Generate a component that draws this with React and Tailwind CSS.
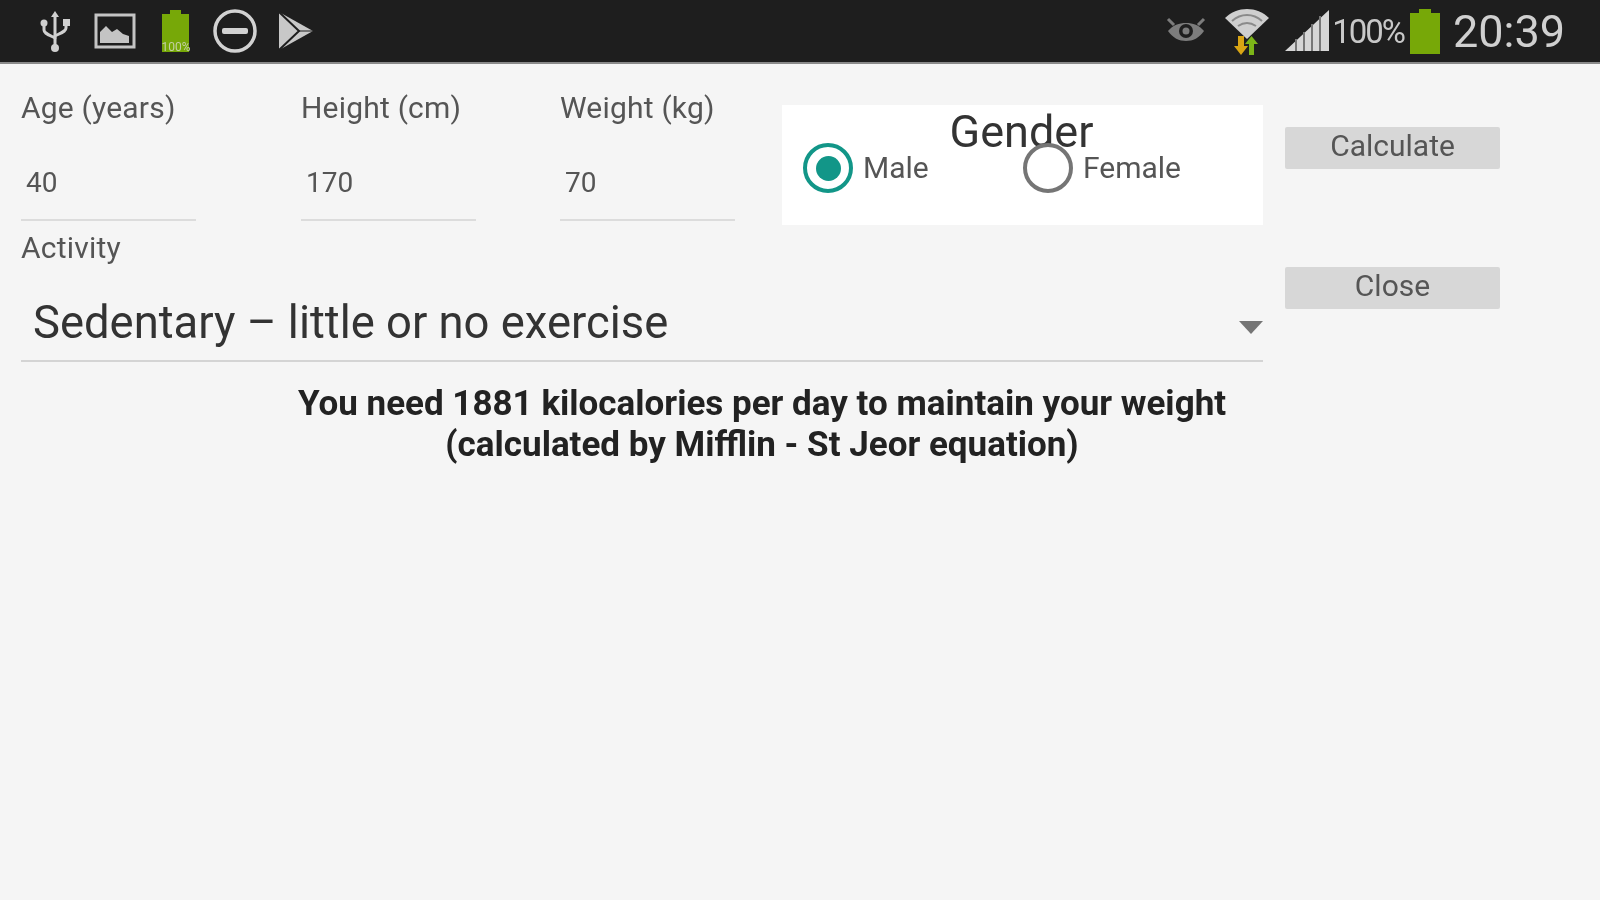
const font = { fontFamily: 'Roboto, sans-serif' }

function StatusLeft() {
  return (
    <div className="flex items-center gap-[11px]">
      <svg width="32" height="44" viewBox="0 0 32 44" fill="none" className="ml-[39px]">
        <g stroke="#d0d0d0" strokeWidth="3" strokeLinecap="round">
          <path d="M16 6v32" />
          <path d="M5 16v5c0 3 3 4 11 8" />
          <path d="M27 14v5c0 3-3 4-11 8" />
        </g>
        <path d="M16 2l4 6h-8z" fill="#d0d0d0" />
        <circle cx="5" cy="14" r="3.500" fill="#d0d0d0" />
        <rect x="24" y="10" width="7" height="7" fill="#d0d0d0" />
        <circle cx="16" cy="39" r="4" fill="#d0d0d0" />
      </svg>
      <svg width="42" height="36" viewBox="0 0 42 36" fill="none" className="ml-[12px]">
        <rect x="2" y="2" width="38" height="32" stroke="#c4c4c4" strokeWidth="3" />
        <path d="M6 30V19l6-6 6 6 5-3 6 5 6 2v7z" fill="#c4c4c4" />
      </svg>
      <svg width="36" height="46" viewBox="0 0 36 46" className="ml-[11px]">
        <path d="M12 2h11v4h8v38H4V6h8z" fill="#77a808" />
        <text x="18" y="43" textAnchor="middle" fontSize="12" fill="#c3d0a4" fontFamily="Roboto, sans-serif">100%</text>
      </svg>
      <svg width="46" height="46" viewBox="0 0 46 46" fill="none" className="ml-[7px]">
        <circle cx="23" cy="23" r="20" stroke="#d2d2d2" strokeWidth="3.500" />
        <rect x="10" y="20" width="26" height="6" rx="2" fill="#d2d2d2" />
      </svg>
      <svg width="38" height="42" viewBox="0 0 38 42" className="ml-[8px]">
        <path d="M2 2l34 19L2 40z" fill="#c8c8c8" />
        <path d="M2 2l20 19L2 40" fill="none" stroke="#1e1e1e" strokeWidth="2" />
        <path d="M22 21h14" stroke="#1e1e1e" strokeWidth="1" />
      </svg>
    </div>
  )
}

function StatusRight() {
  return (
    <div className="flex items-center" style={font}>
      <svg width="42" height="32" viewBox="0 0 42 32" fill="none">
        <path d="M3 16c5-6 11-8 18-8s13 2 18 8c-5 7-11 10-18 10S8 23 3 16z" fill="#7c7c7c" />
        <circle cx="21" cy="16" r="7" fill="#1e1e1e" />
        <circle cx="21" cy="16" r="3.500" fill="#7c7c7c" />
        <path d="M3 4l6 6M39 4l-6 6" stroke="#7c7c7c" strokeWidth="3" />
      </svg>
      <svg width="48" height="52" viewBox="0 0 48 52" fill="none" className="ml-[16px]">
        <path d="M2 13C14 1 34 1 46 13L24 34z" fill="#cfcfcf" />
        <path d="M9 16c9-8 21-8 30 0M15 21c6-4 12-4 18 0" stroke="#8a8a8a" strokeWidth="2" />
        <path d="M15 31h6v10h4l-7 9-7-9h4z" fill="#d9a514" />
        <path d="M31 50h-5V39h-4l6.500-8 6.500 8h-4z" fill="#7cb518" />
      </svg>
      <svg width="46" height="44" viewBox="0 0 46 44" className="ml-[13px]">
        <path d="M1 42L45 1v41z" fill="#d6d6d6" />
        <path d="M12 42V30M20 42V23M28 42V15M36 42V7" stroke="#777" strokeWidth="2" />
      </svg>
      <span className="ml-[2px] text-[33px] leading-none tracking-[-2px] text-[#c8c8c8]">100%</span>
      <svg width="32" height="46" viewBox="0 0 32 46" className="ml-[5px]">
        <path d="M10 1h12v4h9v41H1V5h9z" fill="#77a808" />
      </svg>
      <span className="ml-[12px] mr-[35px] text-[45px] leading-none text-[#d0d0d0]">20:39</span>
    </div>
  )
}

function Field({ label, value, className }) {
  return (
    <div className={`flex w-[175px] flex-col ${className}`}>
      <span className="text-[30px] leading-[34px] tracking-[0.2px] text-[#555]">{label}</span>
      <span className="mt-[41px] pl-[5px] text-[28px] leading-[34px] text-[#555]">{value}</span>
      <div className="mt-[19px] h-[2px] bg-[#dcdcdc]" />
    </div>
  )
}

function Radio({ checked, label, className }) {
  return (
    <div className={`flex items-center ${className}`}>
      <div className={`flex h-[50px] w-[50px] items-center justify-center rounded-full border-[4px] ${checked ? 'border-[#129688]' : 'border-[#757575]'}`}>
        {checked && <div className="h-[25px] w-[25px] rounded-full bg-[#129688]" />}
      </div>
      <span className="ml-[10px] text-[30px] leading-[34px] text-[#555]">{label}</span>
    </div>
  )
}

export default function App() {
  return (
    <div className="flex min-h-[900px] flex-col bg-[#f5f5f5]" style={font}>
      <header className="flex h-[64px] items-center justify-between border-b-[2px] border-[#8a8a8a] bg-[#1e1e1e] blur-[0.6px]">
        <StatusLeft />
        <StatusRight />
      </header>

      <main className="flex flex-col blur-[0.7px]">
        <div className="flex pl-[21px]">
          <div className="w-[1242px]">
            <div className="flex">
              <div className="flex pt-[27px]">
                <Field label="Age (years)" value="40" />
                <Field label="Height (cm)" value="170" className="ml-[105px]" />
                <Field label="Weight (kg)" value="70" className="ml-[84px]" />
              </div>
              <div className="ml-[47px] mt-[41px] flex h-[120px] w-[481px] flex-col bg-white">
                <span className="self-center pr-[2px] pt-[1px] text-[45px] leading-[52px] text-[#333]">Gender</span>
                <div className="-mt-[15px] flex pl-[21px]">
                  <Radio checked label="Male" className="w-[220px]" />
                  <Radio label="Female" />
                </div>
              </div>
            </div>

            <div className="mt-[6px] text-[30px] leading-[34px] tracking-[0.2px] text-[#555]">Activity</div>

            <div className="mt-[32px] flex items-center justify-between border-b-[2px] border-[#d4d4d4] pb-[11px] pl-[12px]">
              <span className="text-[45.400px] leading-[52px] text-[#333]">Sedentary – little or no exercise</span>
              <svg width="24" height="13" viewBox="0 0 24 13" className="mt-[8px]">
                <path d="M0 0h24L12 13z" fill="#757575" />
              </svg>
            </div>
          </div>

          <div className="ml-[22px] flex w-[215px] flex-col pt-[63px]">
            <button className="h-[42px] rounded-[2px] bg-[#d7d7d7] pb-[4px] text-[30px] leading-[34px] text-[#555]">Calculate</button>
            <button className="mt-[98px] h-[42px] rounded-[2px] bg-[#d7d7d7] pb-[4px] text-[30px] leading-[34px] text-[#555]">Close</button>
          </div>
        </div>

        <p className="mt-[21px] w-[1524px] text-center text-[35px] font-bold leading-[41px] text-[#222]">
          You need 1881 kilocalories per day to maintain your weight
          <br />
          (calculated by Mifflin - St Jeor equation)
        </p>
      </main>
    </div>
  )
}
